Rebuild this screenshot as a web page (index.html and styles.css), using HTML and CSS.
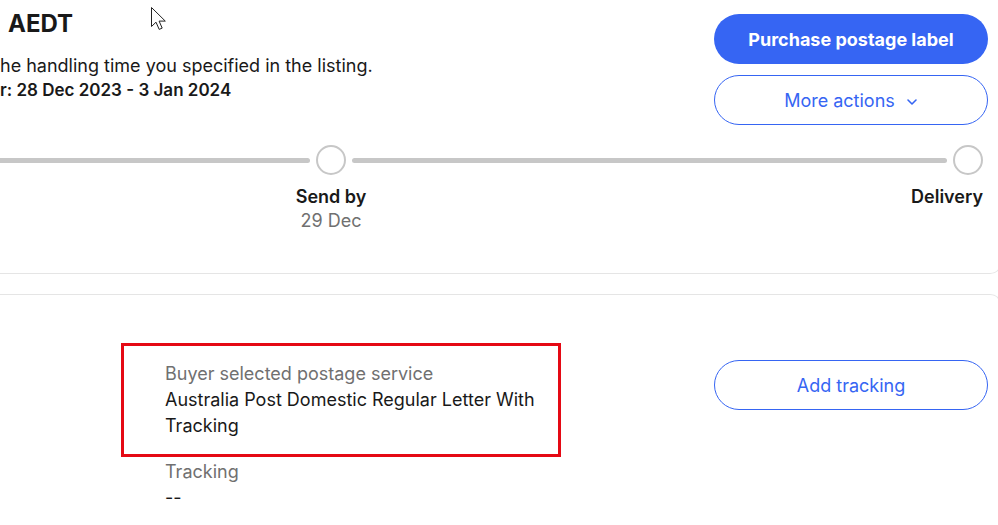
FILE: index.html
```html
<!DOCTYPE html>
<html lang="en">
<head>
    <meta charset="UTF-8">
    <meta name="viewport" content="width=device-width, initial-scale=1.0">
    <title>Order details</title>
    <link rel="stylesheet" href="styles.css">
</head>
<body>
    <div class="page">
        <!-- Shipping summary card -->
        <section class="card card-top">
            <div class="top-row">
                <div class="summary">
                    <h1 class="summary-title">AEDT</h1>
                    <p class="summary-note">he handling time you specified in the listing.</p>
                    <p class="summary-dates">r: 28 Dec 2023 - 3 Jan 2024</p>
                </div>
                <div class="actions">
                    <button class="btn btn-primary">Purchase postage label</button>
                    <button class="btn btn-outline">More actions
                        <svg class="chevron" width="12" height="8" viewBox="0 0 12 8"><path d="M2 2l4 4 4-4" fill="none" stroke="#3665f3" stroke-width="1.6" stroke-linecap="round" stroke-linejoin="round"/></svg>
                    </button>
                </div>
            </div>

            <!-- Progress tracker -->
            <div class="tracker">
                <div class="track-line track-line-first"></div>
                <div class="step">
                    <div class="dot"></div>
                    <div class="step-label">Send by</div>
                    <div class="step-date">29 Dec</div>
                </div>
                <div class="track-line"></div>
                <div class="step step-end">
                    <div class="dot"></div>
                    <div class="step-label">Delivery</div>
                </div>
            </div>
        </section>

        <!-- Postage card -->
        <section class="card card-bottom">
            <div class="postage-row">
                <div class="postage-info">
                    <div class="field-label">Buyer selected postage service</div>
                    <div class="field-value">Australia Post Domestic Regular Letter With<br>Tracking</div>
                    <div class="field-label field-gap">Tracking</div>
                    <div class="field-value">--</div>
                </div>
                <div class="actions actions-low">
                    <button class="btn btn-outline">Add tracking</button>
                </div>
            </div>
            <div class="highlight"></div>
        </section>

        <svg class="cursor" width="18" height="26" viewBox="0 0 18 26"><path d="M1.5 1.5v19l4.5-4.3 3.2 7.2 3-1.3-3.1-7h6.2z" fill="#fff" stroke="#222" stroke-width="1" stroke-linejoin="round"/></svg>
    </div>
</body>
</html>
```

FILE: styles.css
```css
html {
    overflow: hidden;
}
body {
    margin: 0;
    font-family: Inter, "Noto Sans", sans-serif;
    color: #191919;
    background: #fff;
}
.page {
    position: relative;
    width: 1002px;
}
.card {
    position: relative;
    border: 1px solid #e5e5e5;
    border-left: none;
    padding-right: 13px;
}
.card-top {
    border-top: none;
    border-radius: 0 0 12px 0;
    height: 274px;
    box-sizing: border-box;
}
.card-bottom {
    border-bottom: none;
    border-radius: 0 12px 0 0;
    margin-top: 20px;
    height: 240px;
}
.top-row {
    display: flex;
    justify-content: space-between;
}
.summary-title {
    font-size: 24px;
    font-weight: 700;
    line-height: 32px;
    margin: 8px 0 0 8px;
}
.summary-note,
.summary-dates {
    font-size: 18px;
    line-height: 24px;
    margin: 0;
}
.summary-note {
    margin-top: 14px;
}
.summary-dates {
    font-size: 17px;
    font-weight: 600;
}
.actions {
    width: 274px;
    display: flex;
    flex-direction: column;
    gap: 11px;
    padding-top: 14px;
}
.btn {
    height: 50px;
    border-radius: 25px;
    font-family: inherit;
    font-size: 18px;
    cursor: pointer;
}
.btn-primary {
    background: #3665f3;
    border: none;
    color: #fff;
    font-weight: 700;
}
.btn-outline {
    background: #fff;
    border: 1px solid #3665f3;
    color: #3665f3;
}
.chevron {
    margin-left: 6px;
    vertical-align: middle;
}
/* Progress tracker */
.tracker {
    display: flex;
    align-items: flex-start;
    gap: 6px;
    margin: 20px 5px 0 0;
}
.track-line {
    flex: 1;
    height: 5px;
    margin-top: 13px;
    background: #c7c7c7;
    border-radius: 3px;
}
.track-line-first {
    flex: 0 0 310px;
    border-radius: 0 3px 3px 0;
}
.step {
    width: 30px;
    display: flex;
    flex-direction: column;
    align-items: center;
    white-space: nowrap;
}
.step-end {
    align-items: flex-end;
}
.dot {
    width: 30px;
    height: 30px;
    box-sizing: border-box;
    border: 2px solid #c7c7c7;
    border-radius: 50%;
    background: #fff;
}
.step-label {
    font-size: 18px;
    font-weight: 600;
    line-height: 24px;
    margin-top: 10px;
}
.step-date {
    font-size: 18px;
    line-height: 24px;
    color: #707070;
}
/* Postage card */
.postage-row {
    display: flex;
    justify-content: space-between;
}
.postage-info {
    padding: 66px 0 0 165px;
}
.field-label {
    font-size: 18px;
    line-height: 26px;
    color: #707070;
}
.field-value {
    font-size: 18px;
    line-height: 26px;
}
.field-gap {
    margin-top: 20px;
}
.actions-low {
    padding-top: 65px;
}
.highlight {
    position: absolute;
    left: 121px;
    top: 48px;
    width: 440px;
    height: 114px;
    box-sizing: border-box;
    border: 3px solid #e50914;
}
.cursor {
    position: absolute;
    left: 150px;
    top: 6px;
}
```
